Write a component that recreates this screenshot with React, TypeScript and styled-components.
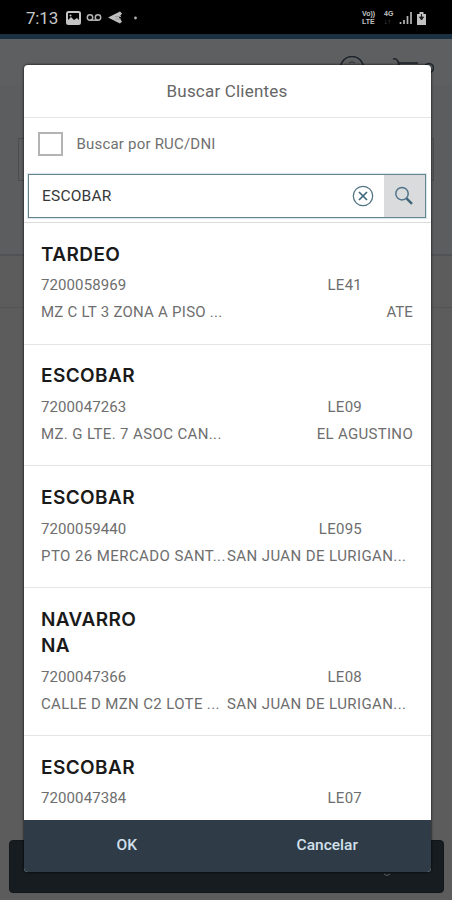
import styled, { createGlobalStyle } from "styled-components";

type Client = {
  name: string[];
  code: string;
  route: string;
  address: string;
  district: string;
  addressSpacing?: number;
  districtSpacing?: number;
  clipped?: boolean;
};

type TextProps = {
  $spacing?: number;
};

const GlobalStyle = createGlobalStyle`
  * {
    box-sizing: border-box;
  }

  body {
    margin: 0;
    background: #5c5c5c;
    font-family: Roboto, "Liberation Sans", sans-serif;
  }
`;

const Screen = styled.div`
  position: relative;
  display: flex;
  flex-direction: column;
  width: 452px;
  height: 900px;
  overflow: hidden;
  background: #5c5c5c;
`;

const StatusBar = styled.div`
  display: flex;
  flex: none;
  justify-content: space-between;
  height: 34px;
  padding: 0 25px 0 26px;
  background: #000;
`;

const StatusGroup = styled.div`
  display: flex;
  align-items: center;
  height: 35px;
`;

const Clock = styled.span`
  width: 40px;
  color: #c8c8c8;
  font-size: 17px;
  letter-spacing: -0.2px;
`;

const Stack = styled.div<{ $width: number; $dim?: boolean }>`
  display: flex;
  flex-direction: column;
  width: ${({ $width }) => $width}px;
  color: #c4c4c4;
  font-family: "Liberation Sans", sans-serif;
  font-size: 7px;
  font-weight: 700;
  line-height: 8px;
  white-space: nowrap;

  span:last-child {
    color: ${({ $dim }) => ($dim ? "#5c5c5c" : "#c4c4c4")};
  }
`;

const PageHeader = styled.div`
  display: flex;
  flex: none;
  justify-content: flex-end;
  height: 51px;
  padding: 17px 18px 0 0;
  border-top: 5px solid #1b3040;
  background: #5d5f60;
`;

const PageFilters = styled.div`
  flex: none;
  height: 171px;
  padding: 53px 18px 0;
  border-bottom: 2px solid #505355;
  background: #5b5d5f;
`;

const PageField = styled.div`
  height: 43px;
  border: 1px solid #4b4d4f;
`;

const PageTabs = styled.div`
  flex: none;
  height: 52px;
  border-bottom: 1px solid #535353;
`;

const PageBody = styled.div`
  flex: 1;
`;

const PageFooter = styled.div`
  display: flex;
  flex: none;
  align-items: flex-end;
  justify-content: flex-end;
  height: 53px;
  margin: 0 8px 7px 9px;
  padding: 0 50px 14px 0;
  border: 1px solid #11161b;
  border-radius: 4px;
  background: #171c20;
`;

const Dialog = styled.section`
  position: absolute;
  top: 65px;
  left: 23.5px;
  display: flex;
  flex-direction: column;
  width: 407px;
  height: 807px;
  overflow: hidden;
  border-radius: 4px;
  background: #fff;
  box-shadow: 0 0 2px 1px rgba(0, 0, 0, 0.45);
`;

const Title = styled.h1`
  flex: none;
  height: 53px;
  margin: 0;
  border-bottom: 1px solid #e5e5e5;
  color: #666;
  font-size: 17px;
  font-weight: 400;
  letter-spacing: 0.2px;
  line-height: 53px;
  text-align: center;
`;

const CheckRow = styled.label`
  display: flex;
  flex: none;
  align-items: center;
  gap: 14px;
  height: 51px;
  padding-left: 14px;
  color: #707070;
  font-size: 15px;
  letter-spacing: 0.2px;
`;

const CheckBox = styled.span`
  width: 25px;
  height: 24px;
  border: 2px solid #b4b4b4;
  background: #fff;
`;

const SearchBar = styled.div`
  flex: none;
  height: 54px;
  padding: 5px 5px 0 4.5px;
  border-bottom: 1px solid #dcdcdc;
`;

const SearchField = styled.div`
  display: flex;
  align-items: center;
  height: 44px;
  border: 1px solid #66838f;
  outline: 1px solid #dbe7ec;
`;

const SearchText = styled.span`
  flex: 1;
  padding-left: 13px;
  color: #383838;
  font-size: 15.5px;
  letter-spacing: 0.2px;
`;

const SearchButton = styled.span`
  display: flex;
  align-items: center;
  justify-content: center;
  width: 41px;
  height: 42px;
  margin-left: 10px;
  background: #dadbdd;
`;

const List = styled.div`
  flex: 1;
  min-height: 0;
  overflow: hidden;
`;

const Item = styled.div`
  padding: 18.6px 17.5px 17.3px;
  border-bottom: 1px solid #e5e5e5;
`;

const Name = styled.div`
  margin-bottom: 4px;
  color: #1a1a1a;
  font-family: Inter, Roboto, sans-serif;
  font-size: 19px;
  font-weight: 600;
  letter-spacing: 0.4px;
  line-height: 26.6px;
`;

const Line = styled.div`
  display: grid;
  grid-template-columns: 186px 186px;
  height: 27.1px;
  color: #6e6e6e;
  font-size: 15px;
  line-height: 27.1px;
  white-space: nowrap;
`;

const Cell = styled.span<TextProps>`
  letter-spacing: ${({ $spacing = 0.1 }) => $spacing}px;
`;

const RightCell = styled(Cell)<{ $inset?: number; $clipped?: boolean }>`
  padding-right: ${({ $inset = 0 }) => $inset}px;
  text-align: ${({ $clipped }) => ($clipped ? "left" : "right")};
`;

const Actions = styled.div`
  display: grid;
  flex: none;
  grid-template-columns: 1fr 1fr;
  height: 52px;
  padding: 0 3px 2px;
  background: #2f3c48;
`;

const Action = styled.button`
  padding: 0;
  border: 0;
  background: none;
  color: #d2e0ec;
  font-family: inherit;
  font-size: 15.5px;
  font-weight: 500;
`;

const clients: Client[] = [
  {
    name: ["TARDEO"],
    code: "7200058969",
    route: "LE41",
    address: "MZ C LT 3 ZONA A PISO ...",
    district: "ATE",
    addressSpacing: 0.25,
  },
  {
    name: ["ESCOBAR"],
    code: "7200047263",
    route: "LE09",
    address: "MZ. G LTE. 7 ASOC CAN...",
    district: "EL AGUSTINO",
    addressSpacing: 0.38,
    districtSpacing: 0.3,
  },
  {
    name: ["ESCOBAR"],
    code: "7200059440",
    route: "LE095",
    address: "PTO 26 MERCADO SANT...",
    district: "SAN JUAN DE LURIGAN...",
    addressSpacing: 0.42,
    districtSpacing: 0.4,
    clipped: true,
  },
  {
    name: ["NAVARRO", "NA"],
    code: "7200047366",
    route: "LE08",
    address: "CALLE D MZN C2 LOTE ...",
    district: "SAN JUAN DE LURIGAN...",
    addressSpacing: 0.35,
    districtSpacing: 0.4,
    clipped: true,
  },
  {
    name: ["ESCOBAR"],
    code: "7200047384",
    route: "LE07",
    address: "",
    district: "",
  },
];

function NotificationIcons() {
  return (
    <svg width="76" height="18" viewBox="0 0 76 18" fill="none">
      <rect x="1" y="3" width="13" height="12" rx="1.5" stroke="#c4c4c4" strokeWidth="2" />
      <path d="M2 14v-3l3-3 3 3 3-2 3 3v2z" fill="#c4c4c4" />
      <circle cx="4.5" cy="6.5" r="1" fill="#c4c4c4" />
      <circle cx="24" cy="8.5" r="2.7" stroke="#b4b4b4" strokeWidth="1.5" />
      <circle cx="32" cy="8.5" r="2.7" stroke="#b4b4b4" strokeWidth="1.5" />
      <path d="M24 11.2h8" stroke="#b4b4b4" strokeWidth="1.5" />
      <path d="M42 8.5l12-6 2 2-3 4 3 4-2 2z" fill="#bebebe" />
      <path d="M49 7.5h6M49 10h6" stroke="#999" />
      <circle cx="69.5" cy="9" r="1.4" fill="#b0b0b0" />
    </svg>
  );
}

function SignalIcons() {
  return (
    <svg width="28" height="18" viewBox="0 0 28 18">
      <path d="M1.5 13v2M5 11v4M8.5 7v8M12 3v12" stroke="#b4b4b4" strokeWidth="1.7" />
      <path d="M18 5h2.5V3h4v2H27v11h-9z" fill="#c2c2c2" />
      <path d="M22.5 5v4M20.5 8h4l-2 3z" stroke="#222" fill="#222" />
    </svg>
  );
}

function HeaderIcons() {
  return (
    <svg width="96" height="28" viewBox="0 0 96 28" fill="none" stroke="#1d242b" strokeWidth="1.5">
      <circle cx="14" cy="12" r="11.5" />
      <path d="M11 7q3-2 6 0" stroke="#3d4145" />
      <path d="M55 3q3-1 4 1l2 3h19M60 6l4 12h12" />
      <circle cx="91" cy="12" r="4.5" />
    </svg>
  );
}

function ClearIcon() {
  return (
    <svg width="22" height="22" viewBox="0 0 22 22" fill="none" stroke="#557685">
      <circle cx="11" cy="11" r="9.7" strokeWidth="1.3" />
      <path d="M7 7l8 8M15 7l-8 8" stroke="#3f687d" strokeWidth="1.7" />
    </svg>
  );
}

function SearchIcon() {
  return (
    <svg width="20" height="20" viewBox="0 0 20 20" fill="none" stroke="#51748a">
      <circle cx="8" cy="7.7" r="6.2" strokeWidth="1.5" />
      <path d="M12.5 12.3l5.5 5.5" stroke="#42647a" strokeWidth="2.4" />
    </svg>
  );
}

function ClientItem({ client }: { client: Client }) {
  const { name, code, route, address, district, clipped } = client;

  return (
    <Item>
      <Name>
        {name.map(part => (
          <div key={part}>{part}</div>
        ))}
      </Name>
      <Line>
        <Cell>{code}</Cell>
        <RightCell $inset={51} $spacing={0.25}>
          {route}
        </RightCell>
      </Line>
      <Line>
        <Cell $spacing={client.addressSpacing}>{address}</Cell>
        <RightCell $clipped={clipped} $spacing={client.districtSpacing}>
          {district}
        </RightCell>
      </Line>
    </Item>
  );
}

function App() {
  return (
    <>
      <GlobalStyle />
      <Screen>
        <StatusBar>
          <StatusGroup>
            <Clock>7:13</Clock>
            <NotificationIcons />
          </StatusGroup>
          <StatusGroup>
            <Stack $width={22}>
              <span>Vo))</span>
              <span>LTE</span>
            </Stack>
            <Stack $width={15} $dim>
              <span>4G</span>
              <span>↓↑</span>
            </Stack>
            <SignalIcons />
          </StatusGroup>
        </StatusBar>
        <PageHeader>
          <HeaderIcons />
        </PageHeader>
        <PageFilters>
          <PageField />
        </PageFilters>
        <PageTabs />
        <PageBody />
        <PageFooter>
          <svg width="12" height="8" viewBox="0 0 12 8" fill="none" stroke="#5b6064">
            <path d="M3 4q3 3 6 0" />
          </svg>
        </PageFooter>
        <Dialog>
          <Title>Buscar Clientes</Title>
          <CheckRow>
            <CheckBox />
            Buscar por RUC/DNI
          </CheckRow>
          <SearchBar>
            <SearchField>
              <SearchText>ESCOBAR</SearchText>
              <ClearIcon />
              <SearchButton>
                <SearchIcon />
              </SearchButton>
            </SearchField>
          </SearchBar>
          <List>
            {clients.map(client => (
              <ClientItem key={client.code} client={client} />
            ))}
          </List>
          <Actions>
            <Action>OK</Action>
            <Action>Cancelar</Action>
          </Actions>
        </Dialog>
      </Screen>
    </>
  );
}

export default App;
